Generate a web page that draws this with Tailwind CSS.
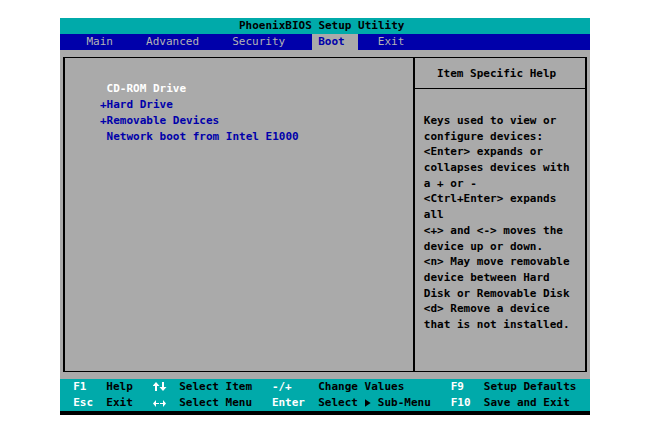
<!DOCTYPE html>
<html lang="en">
<head>
    <meta charset="UTF-8">
    <meta name="viewport" content="width=device-width, initial-scale=1.0">
    <title>PhoenixBIOS Setup Utility</title>
    <script src="https://cdn.jsdelivr.net/npm/@tailwindcss/browser@4"></script>
</head>
<body class="bg-white min-h-screen px-[60px] py-[18px] font-['DejaVu_Sans_Mono',monospace] text-[11px] leading-4 font-bold text-black">
    <div class="flex flex-col bg-[#aaaaaa]">
        <h1 class="bg-[#00aaaa] pr-[1ch] text-center font-bold">PhoenixBIOS Setup Utility</h1>

        <nav class="flex bg-[#0000aa] pl-[3ch] font-normal text-[#b4b4b4]">
            <button type="button" class="w-[9ch] px-[1ch] text-left">Main</button>
            <button type="button" class="w-[13ch] px-[1ch] text-left">Advanced</button>
            <button type="button" class="w-[13ch] px-[1ch] text-left">Security</button>
            <button type="button" class="w-[7ch] bg-[#aaaaaa] px-[1ch] text-left font-bold text-[#0000aa]" aria-current="page">Boot</button>
            <button type="button" class="ml-[2ch] px-[1ch] text-left">Exit</button>
        </nav>

        <main class="mx-[3px] my-[7px] flex border-x-2 border-y border-black">
            <ul class="flex-1 pt-[23px] pl-[35px] text-[#0000aa]">
                <li><button type="button" class="pl-[1ch] text-white">CD-ROM Drive</button></li>
                <li><button type="button">+Hard Drive</button></li>
                <li><button type="button">+Removable Devices</button></li>
                <li><button type="button" class="pl-[1ch]">Network boot from Intel E1000</button></li>
            </ul>
            <aside class="flex w-[26ch] flex-col border-l-2 border-black">
                <h2 class="border-b border-black pt-2 pr-[1ch] pb-1.5 text-center font-bold">Item Specific Help</h2>
                <div class="flex h-[282px] flex-col justify-between pt-6 pb-[39px] pl-[9px] leading-[15px] whitespace-nowrap">
                    <p>Keys used to view or</p>
                    <p>configure devices:</p>
                    <p>&lt;Enter&gt; expands or</p>
                    <p>collapses devices with</p>
                    <p>a + or -</p>
                    <p>&lt;Ctrl+Enter&gt; expands</p>
                    <p>all</p>
                    <p>&lt;+&gt; and &lt;-&gt; moves the</p>
                    <p>device up or down.</p>
                    <p>&lt;n&gt; May move removable</p>
                    <p>device between Hard</p>
                    <p>Disk or Removable Disk</p>
                    <p>&lt;d&gt; Remove a device</p>
                    <p>that is not installed.</p>
                </div>
            </aside>
        </main>

        <footer class="grid grid-cols-[5ch_7ch_4ch_14ch_7ch_20ch_5ch_auto] border-b-4 border-black bg-[#00aaaa] pl-[2ch] whitespace-nowrap">
            <kbd class="font-[inherit] text-[11px] text-white">F1</kbd>
            <span>Help</span>
            <svg class="h-4 w-[14px]" viewBox="0 0 14 16" fill="#fff" role="img" aria-label="Up and down arrows">
                <path d="M3 3l3.500 4H4v5H2V7H-.5zM10 12L6.500 8H9V3h2v5h2.500z" />
            </svg>
            <span>Select Item</span>
            <kbd class="font-[inherit] text-[11px] text-white">-/+</kbd>
            <span>Change Values</span>
            <kbd class="font-[inherit] text-[11px] text-white">F9</kbd>
            <span>Setup Defaults</span>

            <kbd class="font-[inherit] text-[11px] text-white">Esc</kbd>
            <span>Exit</span>
            <svg class="h-4 w-[14px]" viewBox="0 0 14 16" fill="#fff" role="img" aria-label="Left and right arrows">
                <path d="M0 8.500L3 5v3h3v1H3v3zM13 8.500L10 5v3H7v1h3v3z" />
            </svg>
            <span>Select Menu</span>
            <kbd class="font-[inherit] text-[11px] text-white">Enter</kbd>
            <span class="flex">Select
                <svg class="mx-[1ch] h-4 w-[1ch]" viewBox="0 0 7 16" fill="#000" role="img" aria-label="right arrow"><path d="M0 4l6 4-6 4z" /></svg>
                Sub-Menu</span>
            <kbd class="font-[inherit] text-[11px] text-white">F10</kbd>
            <span>Save and Exit</span>
        </footer>
    </div>
</body>
</html>
